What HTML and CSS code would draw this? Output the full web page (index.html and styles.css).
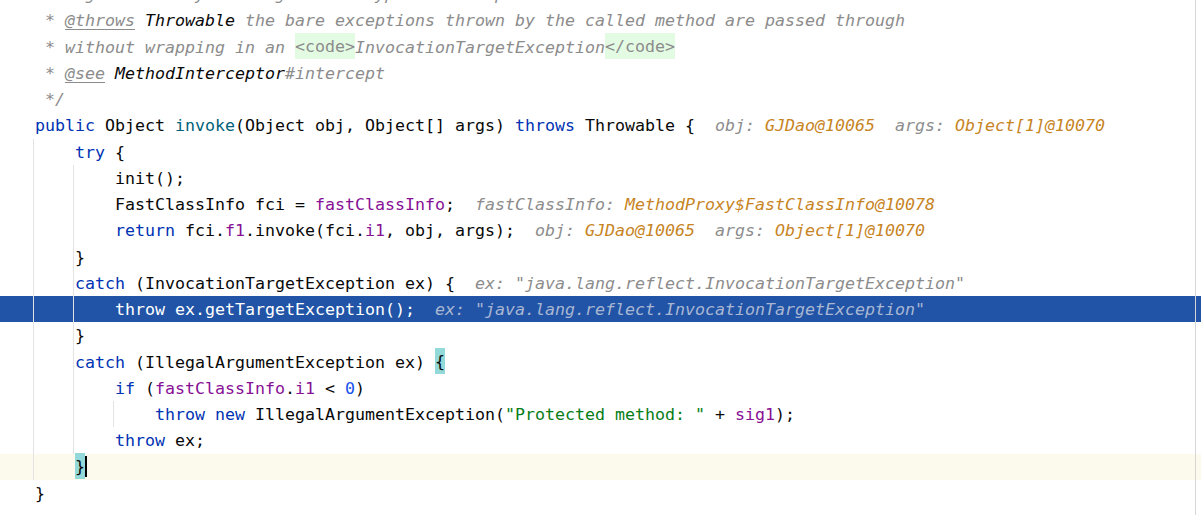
FILE: index.html
```html
<!DOCTYPE html>
<html>
<head>
<meta charset="utf-8">
<link rel="stylesheet" href="styles.css">
</head>
<body>
<div class="editor">
  <div class="code">
    <div class="line"><span class="c"> * argument array as long as the types are compatible</span></div>
    <div class="line"><span class="c"> * <span class="ct">@throws</span> <span class="cd">Throwable</span> the bare exceptions thrown by the called method are passed through</span></div>
    <div class="line"><span class="c"> * without wrapping in an <span class="ch">&lt;code&gt;</span>InvocationTargetException<span class="ch">&lt;/code&gt;</span></span></div>
    <div class="line"><span class="c"> * <span class="ct">@see</span> <span class="cd">MethodInterceptor</span>#intercept</span></div>
    <div class="line"><span class="c"> */</span></div>
    <div class="line"><span class="k">public</span> Object <span class="m">invoke</span>(Object obj, Object[] args) <span class="k">throws</span> Throwable {  <span class="h">obj: </span><span class="hv">GJDao@10065</span>  <span class="h">args: </span><span class="hv">Object[1]@10070</span></div>
    <div class="line">    <span class="k">try</span> {</div>
    <div class="line">        init();</div>
    <div class="line">        FastClassInfo fci = <span class="f">fastClassInfo</span>;  <span class="h">fastClassInfo: </span><span class="hv">MethodProxy$FastClassInfo@10078</span></div>
    <div class="line">        <span class="k">return</span> fci.<span class="f">f1</span>.invoke(fci.<span class="f">i1</span>, obj, args);  <span class="h">obj: </span><span class="hv">GJDao@10065</span>  <span class="h">args: </span><span class="hv">Object[1]@10070</span></div>
    <div class="line">    }</div>
    <div class="line">    <span class="k">catch</span> (InvocationTargetException ex) {  <span class="h">ex: "java.lang.reflect.InvocationTargetException"</span></div>
    <div class="line sel">        <span class="k">throw</span> ex.getTargetException();  <span class="h">ex: "java.lang.reflect.InvocationTargetException"</span></div>
    <div class="line">    }</div>
    <div class="line">    <span class="k">catch</span> (IllegalArgumentException ex) <span class="bm">{</span></div>
    <div class="line">        <span class="k">if</span> (<span class="f">fastClassInfo</span>.<span class="f">i1</span> &lt; <span class="n">0</span>)</div>
    <div class="line">            <span class="k">throw new</span> IllegalArgumentException(<span class="s">"Protected method: "</span> + <span class="f">sig1</span>);</div>
    <div class="line">        <span class="k">throw</span> ex;</div>
    <div class="line cur">    <span class="bm">}</span><span class="caret"></span></div>
    <div class="line">}</div>
  </div>
  <div class="guide g0"></div>
  <div class="guide g1"></div>
  <div class="guide g2"></div>
  <div class="margin-line"></div>
</div>
</body>
</html>
```

FILE: styles.css
```css
html, body {
  margin: 0;
  padding: 0;
  background: #ffffff;
}

.editor {
  position: relative;
  width: 1201px;
  height: 515px;
  overflow: hidden;
  background: #ffffff;
  font-family: "DejaVu Sans Mono", "Liberation Mono", monospace;
  font-size: 16.61px;
  color: #080808;
}

.code {
  margin-top: -19px;
}

.line {
  box-sizing: border-box;
  height: 26.25px;
  padding-top: 2px;
  line-height: 24.25px;
  padding-left: 35px;
  white-space: pre;
}

.line.sel {
  background: #2154a6;
  color: #ffffff;
}

.line.sel .k {
  color: #ffffff;
}

.line.sel .h {
  color: #a9b7d3;
}

.line.cur {
  background: #fcfaed;
}

.k { color: #0033b3; }
.m { color: #00627a; }
.f { color: #871094; }
.n { color: #1750eb; }
.s { color: #067d17; }

.c {
  color: #8c8c8c;
  font-style: italic;
}

.ct {
  text-decoration: underline;
  text-decoration-color: #8c8c8c;
  text-underline-offset: 3px;
}

.cd {
  color: #080808;
}

.ch {
  background: #e3fbe3;
  font-style: normal;
  padding-top: 4.47px;
  padding-bottom: 2.45px;
}

.h {
  color: #8c8c8c;
  font-style: italic;
}

.hv {
  color: #c7841f;
  font-style: italic;
}

.bm {
  background: #93d9d9;
  padding-top: 4.47px;
  padding-bottom: 2.45px;
}

.caret {
  display: inline-block;
  width: 2px;
  height: 21px;
  background: #000000;
  vertical-align: top;
  margin-top: 0.5px;
}

.guide {
  position: absolute;
  width: 1px;
  background: #e3e3e3;
}

.g0 {
  left: 33px;
  top: 138.5px;
  height: 341.25px;
}

.g1 {
  left: 73px;
  top: 164.75px;
  height: 288.75px;
}

.g2 {
  left: 113px;
  top: 401px;
  height: 26.25px;
}

.margin-line {
  position: absolute;
  left: 1195px;
  top: 0;
  width: 1px;
  height: 515px;
  background: #d6d6d6;
}
```
